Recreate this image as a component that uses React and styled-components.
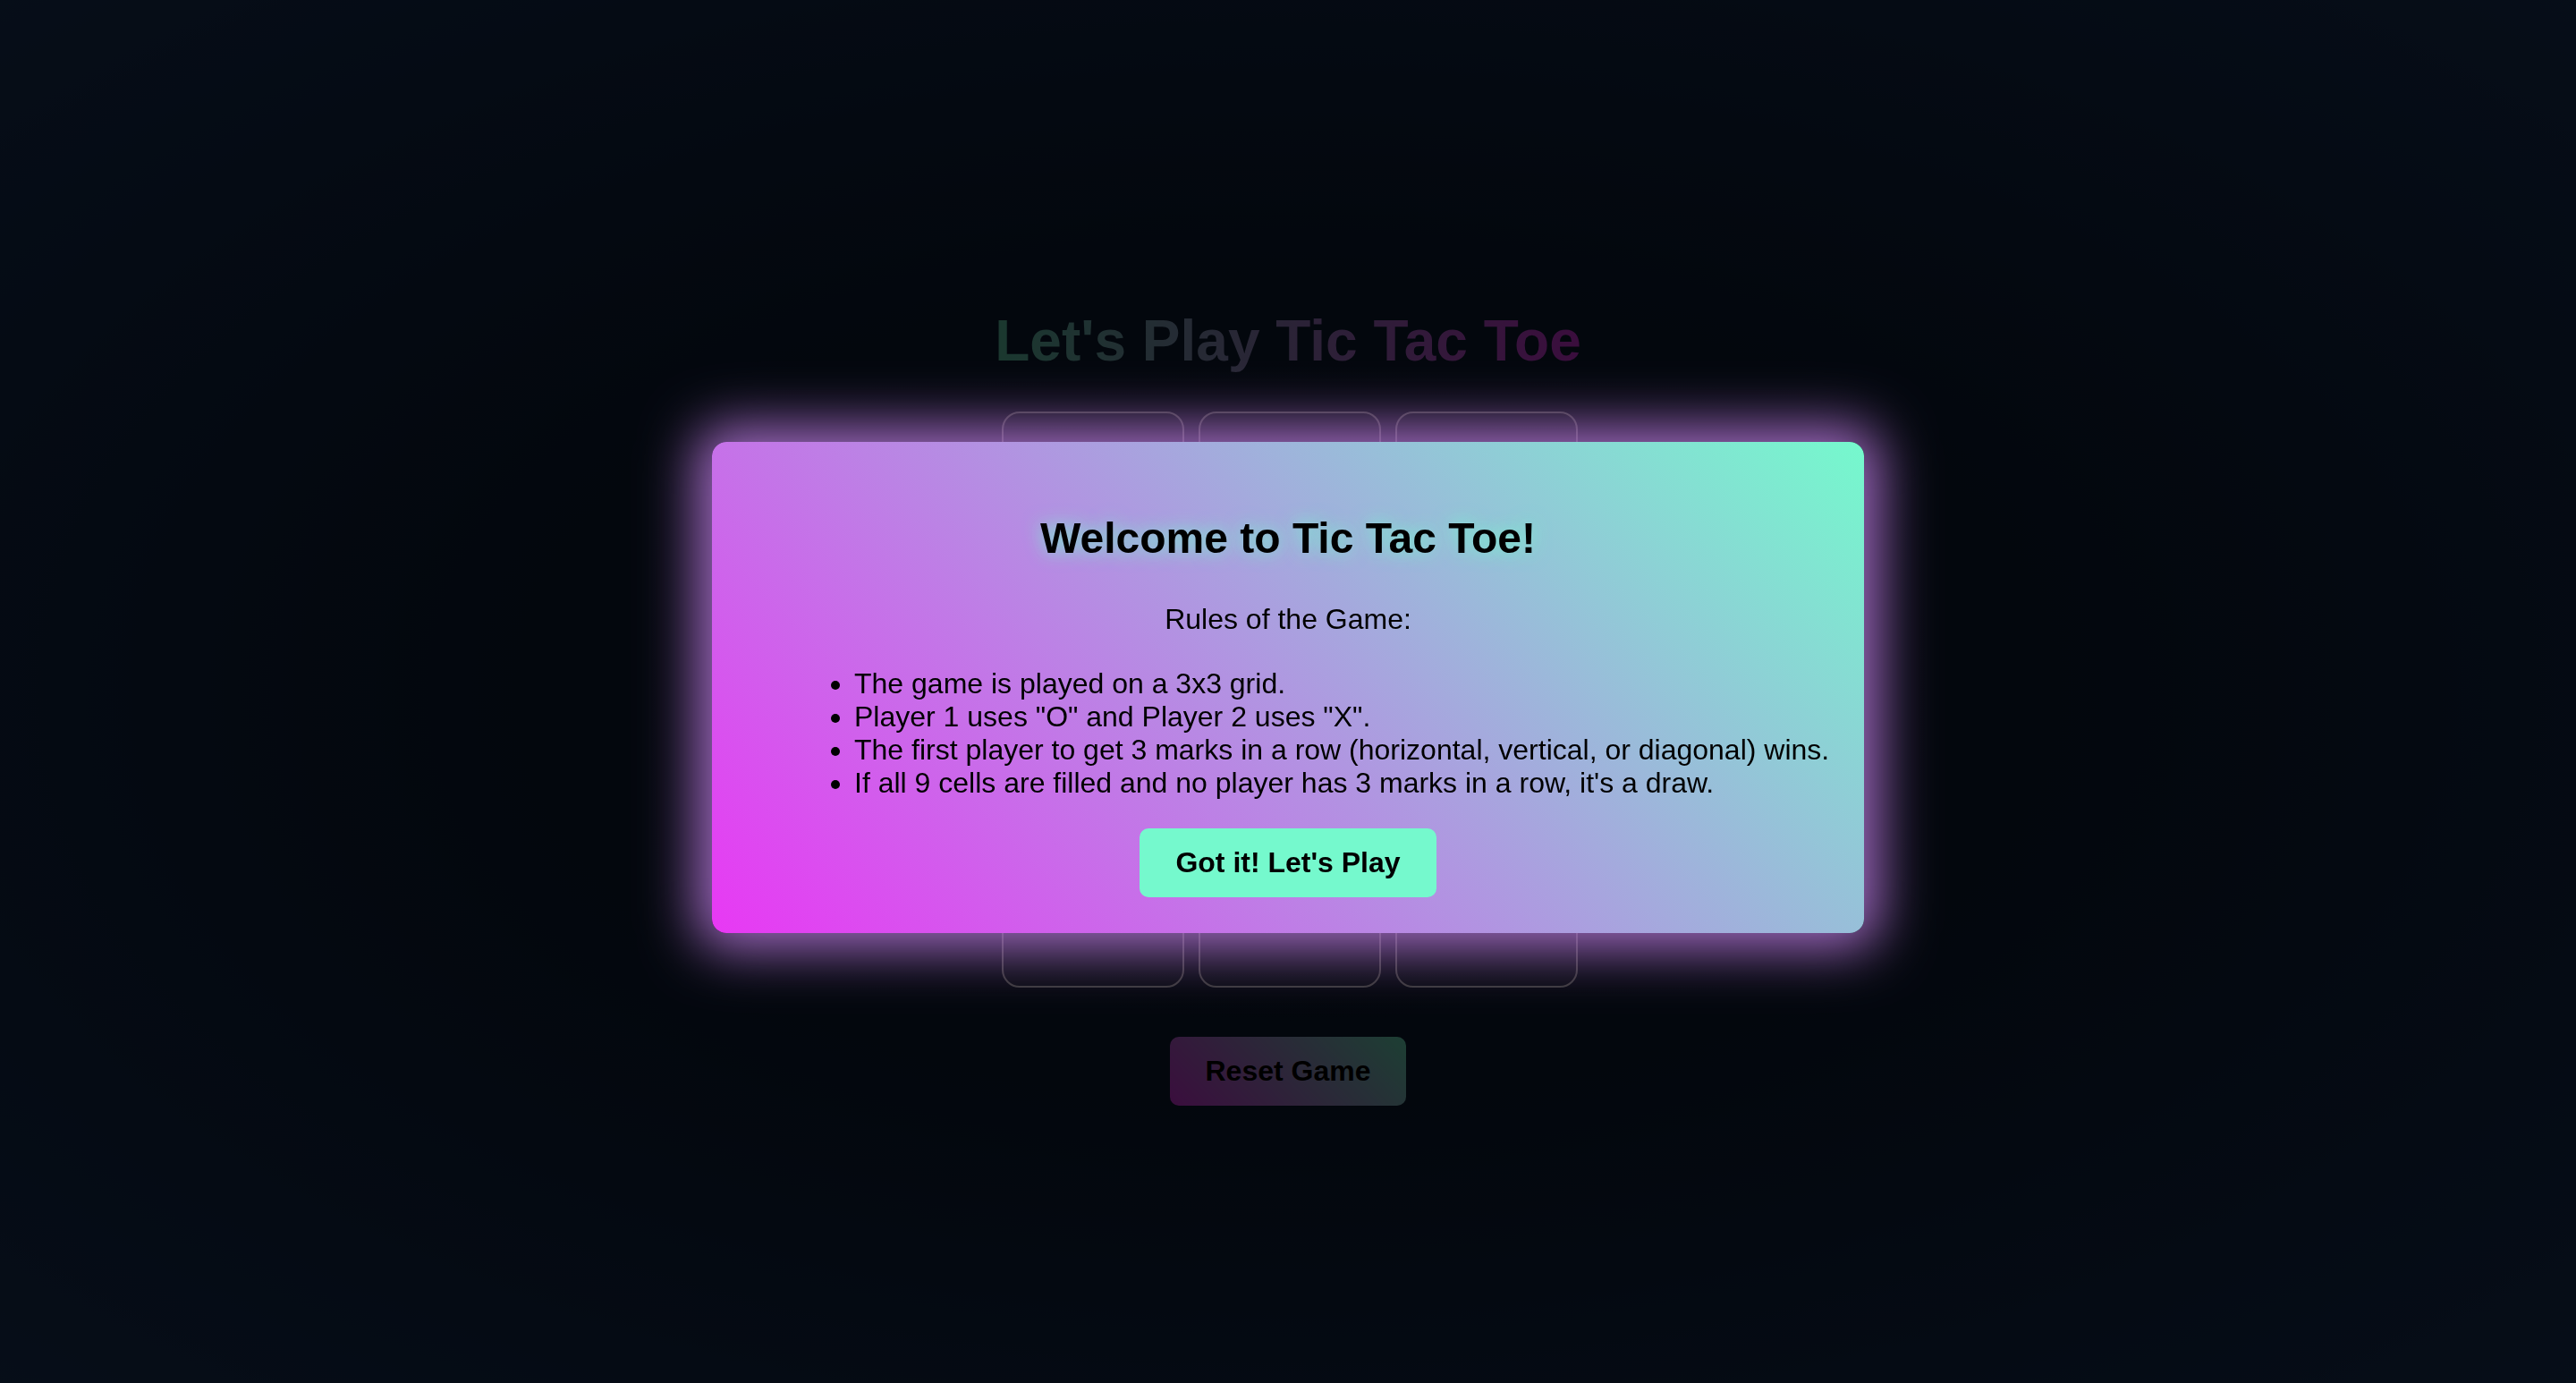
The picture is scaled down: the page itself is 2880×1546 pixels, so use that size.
import React from "react";
import styled, { createGlobalStyle } from "styled-components";

const magenta = "#e838f4";
const mint = "#75f9cd";

const GlobalStyle = createGlobalStyle`
  html, body {
    margin: 0;
    padding: 0;
  }
  body {
    font-family: "Liberation Sans", Arial, Helvetica, sans-serif;
    color: black;
  }
`;

const Page = styled.div`
  min-height: 100vh;
  box-sizing: border-box;
  padding-top: 34px;
  display: flex;
  flex-direction: column;
  align-items: center;
  justify-content: center;
  background: radial-gradient(ellipse at center, #0a1628 0%, #0e1e38 45%, #1a3862 100%);
`;

const Title = styled.h1`
  margin: 0 0 42px;
  font-size: 64px;
  font-weight: bold;
  background: linear-gradient(90deg, #6ae0bc, ${magenta});
  -webkit-background-clip: text;
  background-clip: text;
  color: transparent;
`;

const Board = styled.div`
  display: grid;
  grid-template-columns: repeat(3, 204px);
  grid-auto-rows: 204px;
  gap: 16px;
  margin-left: 4px;
`;

const Cell = styled.div`
  box-sizing: border-box;
  border: 2px solid #dcdcdc;
  border-radius: 20px;
  background: rgba(255, 255, 255, 0.06);
`;

const GradientButton = styled.button`
  margin-top: 55px;
  padding: 20px 40px;
  border: none;
  border-radius: 10px;
  font-family: inherit;
  font-size: 32px;
  font-weight: bold;
  color: black;
  background: linear-gradient(45deg, ${magenta}, ${mint});
  cursor: pointer;
`;

const Overlay = styled.div`
  position: fixed;
  inset: 0;
  padding-bottom: 10px;
  background: rgba(0, 0, 0, 0.75);
  display: flex;
  align-items: center;
  justify-content: center;
`;

const Modal = styled.div`
  box-sizing: border-box;
  width: 1288px;
  padding: 40px;
  border-radius: 16px;
  text-align: center;
  background: linear-gradient(45deg, ${magenta}, ${mint});
  box-shadow: 0 0 60px 18px rgba(200, 130, 238, 0.8);
`;

const ModalTitle = styled.h2`
  margin: 40px 0 0;
  font-size: 48px;
  font-weight: bold;
  text-shadow: 0 0 20px rgba(116, 249, 204, 0.95);
`;

const RulesLabel = styled.p`
  margin: 45px 0 0;
  font-size: 32px;
`;

const RuleList = styled.ul`
  margin: 35px 0 32px;
  padding-left: 119px;
  text-align: left;
`;

const Rule = styled.li`
  font-size: 32px;
  white-space: nowrap;
`;

const PlayButton = styled.button`
  padding: 20px 40px;
  border: none;
  border-radius: 10px;
  font-family: inherit;
  font-size: 32px;
  font-weight: bold;
  color: black;
  background: ${mint};
  cursor: pointer;
`;

const rules = [
  "The game is played on a 3x3 grid.",
  'Player 1 uses "O" and Player 2 uses "X".',
  "The first player to get 3 marks in a row (horizontal, vertical, or diagonal) wins.",
  "If all 9 cells are filled and no player has 3 marks in a row, it's a draw."
];

const App = () => (
  <>
    <GlobalStyle />
    <Page>
      <Title>Let's Play Tic Tac Toe</Title>
      <Board>
        {Array.from({ length: 9 }).map((_, i) => (
          <Cell key={i} />
        ))}
      </Board>
      <GradientButton>Reset Game</GradientButton>
    </Page>
    <Overlay>
      <Modal>
        <ModalTitle>Welcome to Tic Tac Toe!</ModalTitle>
        <RulesLabel>Rules of the Game:</RulesLabel>
        <RuleList>
          {rules.map(rule => (
            <Rule key={rule}>{rule}</Rule>
          ))}
        </RuleList>
        <PlayButton>Got it! Let's Play</PlayButton>
      </Modal>
    </Overlay>
  </>
);

export default App;
